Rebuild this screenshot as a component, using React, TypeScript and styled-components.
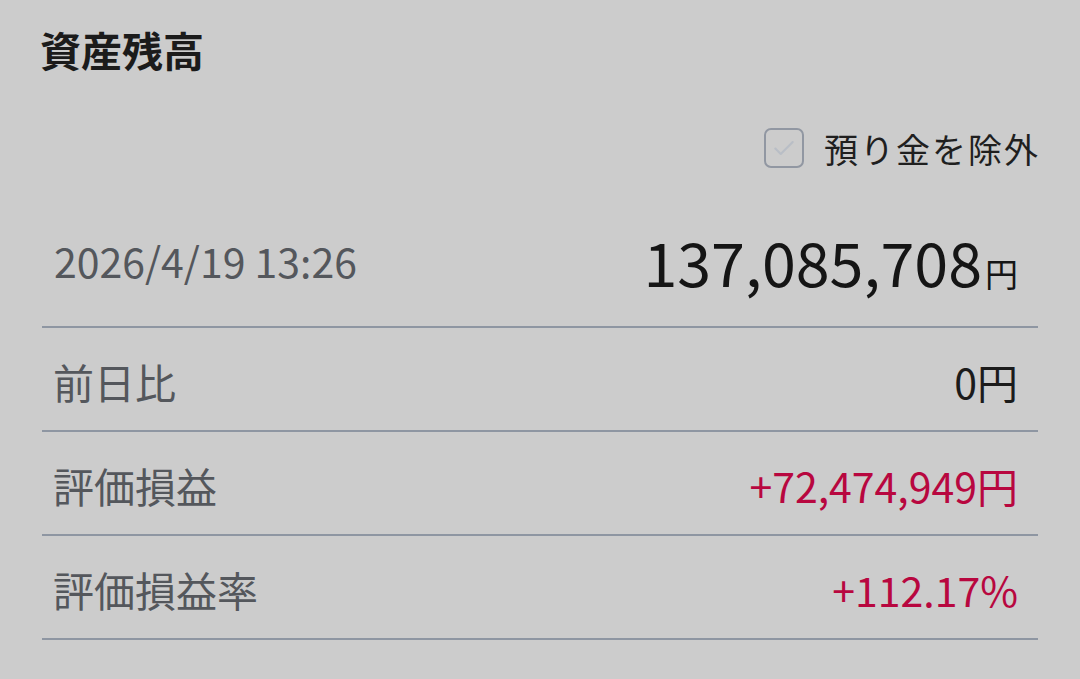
import React from 'react'
import styled, { createGlobalStyle } from 'styled-components'

const GlobalStyle = createGlobalStyle`
	body {
		margin: 0;
		background: #cccccc;
		font-family: 'Noto Sans CJK JP', 'Noto Sans', sans-serif;
	}
`

const Page = styled.div`
	width: 1080px;
	height: 679px;
	box-sizing: border-box;
	padding: 0 42px;
	display: flex;
	flex-direction: column;
	overflow: hidden;
`

const Title = styled.h1`
	margin: 0;
	height: 104px;
	line-height: 98px;
	font-size: 41px;
	font-weight: 700;
	color: #1b1b1b;
	margin-left: -2px;
`

const OptionRow = styled.div`
	height: 88px;
	display: flex;
	align-items: center;
	justify-content: flex-end;
	margin-right: -2px;
`

const CheckLabel = styled.label`
	display: flex;
	align-items: center;
	gap: 20px;
	font-size: 34px;
	letter-spacing: 2px;
	color: #1f1f1f;
`

const Box = styled.span`
	width: 36px;
	height: 36px;
	border: 2px solid #9197a2;
	border-radius: 7px;
	display: flex;
	align-items: center;
	justify-content: center;
`

const Row = styled.div<{ $tall?: boolean }>`
	box-sizing: border-box;
	height: ${(p) => (p.$tall ? '136px' : '104px')};
	padding: ${(p) => (p.$tall ? '2px 20px 0 11px' : '4px 20px 0 11px')};
	border-bottom: 2px solid #8e96a2;
	display: flex;
	align-items: center;
	justify-content: space-between;
`

const Label = styled.span`
	font-size: 41px;
	color: #54575c;
`

const DateText = styled.span`
	font-size: 41px;
	color: #54575c;
	margin-left: 1px;
`

const Total = styled.span`
	font-size: 61px;
	color: #151515;
	display: flex;
	align-items: baseline;
`

const Unit = styled.span`
	font-size: 33px;
	margin-left: 3px;
`

const Value = styled.span<{ $plus?: boolean }>`
	font-size: 41px;
	color: ${(p) => (p.$plus ? '#b8073f' : '#1b1b1b')};
`

const App: React.FC = () => {
	return (
		<>
			<GlobalStyle />
			<Page>
				<Title>資産残高</Title>
				<OptionRow>
					<CheckLabel>
						<Box>
							<svg width="26" height="26" viewBox="0 0 24 24" fill="none">
								<path d="M4 12.5l5 5L20 6.5" stroke="#b9bec6" strokeWidth="2" strokeLinecap="round" strokeLinejoin="round" />
							</svg>
						</Box>
						預り金を除外
					</CheckLabel>
				</OptionRow>
				<Row $tall>
					<DateText>2026/4/19 13:26</DateText>
					<Total>
						137,085,708<Unit>円</Unit>
					</Total>
				</Row>
				<Row>
					<Label>前日比</Label>
					<Value>0円</Value>
				</Row>
				<Row>
					<Label>評価損益</Label>
					<Value $plus>+72,474,949円</Value>
				</Row>
				<Row>
					<Label>評価損益率</Label>
					<Value $plus>+112.17%</Value>
				</Row>
			</Page>
		</>
	)
}

export default App
